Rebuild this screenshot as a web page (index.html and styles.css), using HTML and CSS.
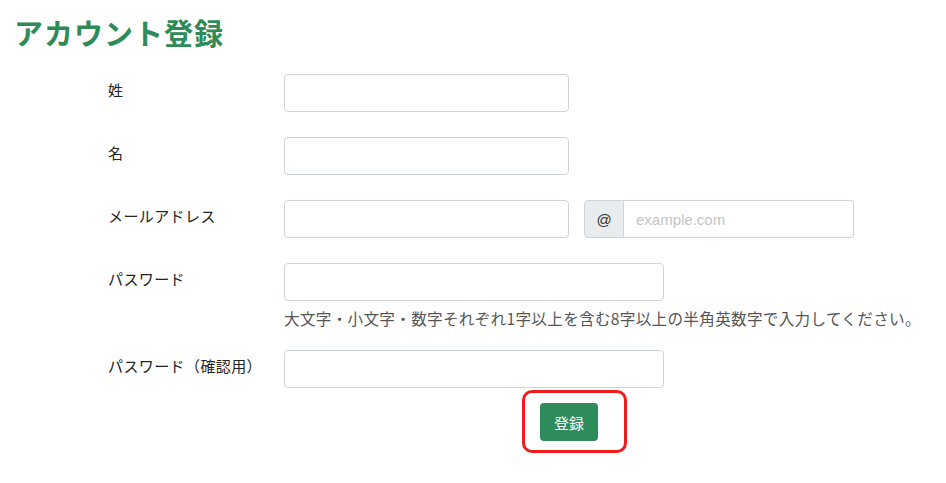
FILE: index.html
```html
<!DOCTYPE html>
<html lang="ja">
<head>
<meta charset="utf-8">
<title>アカウント登録</title>
<link rel="stylesheet" href="styles.css">
</head>
<body>
<div class="page">
  <h1 class="title">アカウント登録</h1>
  <form class="form">
    <div class="row">
      <label class="label">姓</label>
      <div class="field"><input class="input" type="text"></div>
    </div>
    <div class="row">
      <label class="label">名</label>
      <div class="field"><input class="input" type="text"></div>
    </div>
    <div class="row">
      <label class="label">メールアドレス</label>
      <div class="field email">
        <input class="input" type="text">
        <div class="group">
          <span class="addon">@</span>
          <input class="input domain" type="text" placeholder="example.com">
        </div>
      </div>
    </div>
    <div class="row">
      <label class="label">パスワード</label>
      <div class="field">
        <input class="input wide" type="password">
        <p class="help">大文字・小文字・数字それぞれ1字以上を含む8字以上の半角英数字で入力してください。</p>
      </div>
    </div>
    <div class="row">
      <label class="label">パスワード（確認用）</label>
      <div class="field"><input class="input wide" type="password"></div>
    </div>
    <div class="actions">
      <button class="btn" type="button">登録</button>
    </div>
  </form>
</div>
</body>
</html>
```

FILE: styles.css
```css
* { box-sizing: border-box; }
body {
  margin: 0;
  background: #fff;
  font-family: "Noto Sans CJK JP", "Noto Sans", sans-serif;
  color: #222;
}
.page { padding: 0 0 20px 14px; }
.title {
  margin: 15px 0 0;
  font-size: 29px;
  line-height: 35px;
  font-weight: 700;
  color: #2e8b57;
  letter-spacing: 1px;
}
.form { margin: 24px 0 0 94px; }
.row {
  display: grid;
  grid-template-columns: 176px 1fr;
  margin-bottom: 25px;
}
.label {
  font-size: 15px;
  line-height: 22px;
  padding-top: 5px;
  color: #222;
  letter-spacing: 0.4px;
}
.field { display: flex; flex-direction: column; }
.field.email { flex-direction: row; gap: 15px; }
.input {
  display: block;
  width: 285px;
  height: 38px;
  border: 1px solid #ced4da;
  border-radius: 4px;
  background: #fff;
  padding: 6px 12px;
  font-family: "Liberation Sans", Arial, sans-serif;
  font-size: 15px;
  outline: none;
}
.input.wide { width: 380px; }
.group { display: flex; width: 270px; }
.addon {
  width: 40px;
  height: 38px;
  display: flex;
  align-items: center;
  justify-content: center;
  background: #e9ecef;
  border: 1px solid #ced4da;
  border-radius: 4px 0 0 4px;
  font-family: "Liberation Sans", Arial, sans-serif;
  font-size: 15px;
  color: #333;
}
.input.domain {
  width: auto;
  flex: 1;
  border-left: 0;
  border-radius: 0 4px 4px 0;
}
.input::placeholder { color: #c4c4c4; }
.help {
  margin: 7px 0 -3px;
  font-size: 15.6px;
  line-height: 20px;
  color: #555;
  letter-spacing: 0.3px;
  white-space: nowrap;
}
.actions {
  display: block;
  width: fit-content;
  margin: -23px 0 0 414px;
  padding: 10px 26px 9px 15px;
  border: 3px solid #f01c1c;
  border-radius: 10px;
}
.btn {
  display: block;
  width: 58px;
  height: 38px;
  border: 0;
  border-radius: 4px;
  background: #2e8b5b;
  color: #fff;
  font-family: "Noto Sans CJK JP", sans-serif;
  font-size: 15px;
  padding: 0;
}
```
